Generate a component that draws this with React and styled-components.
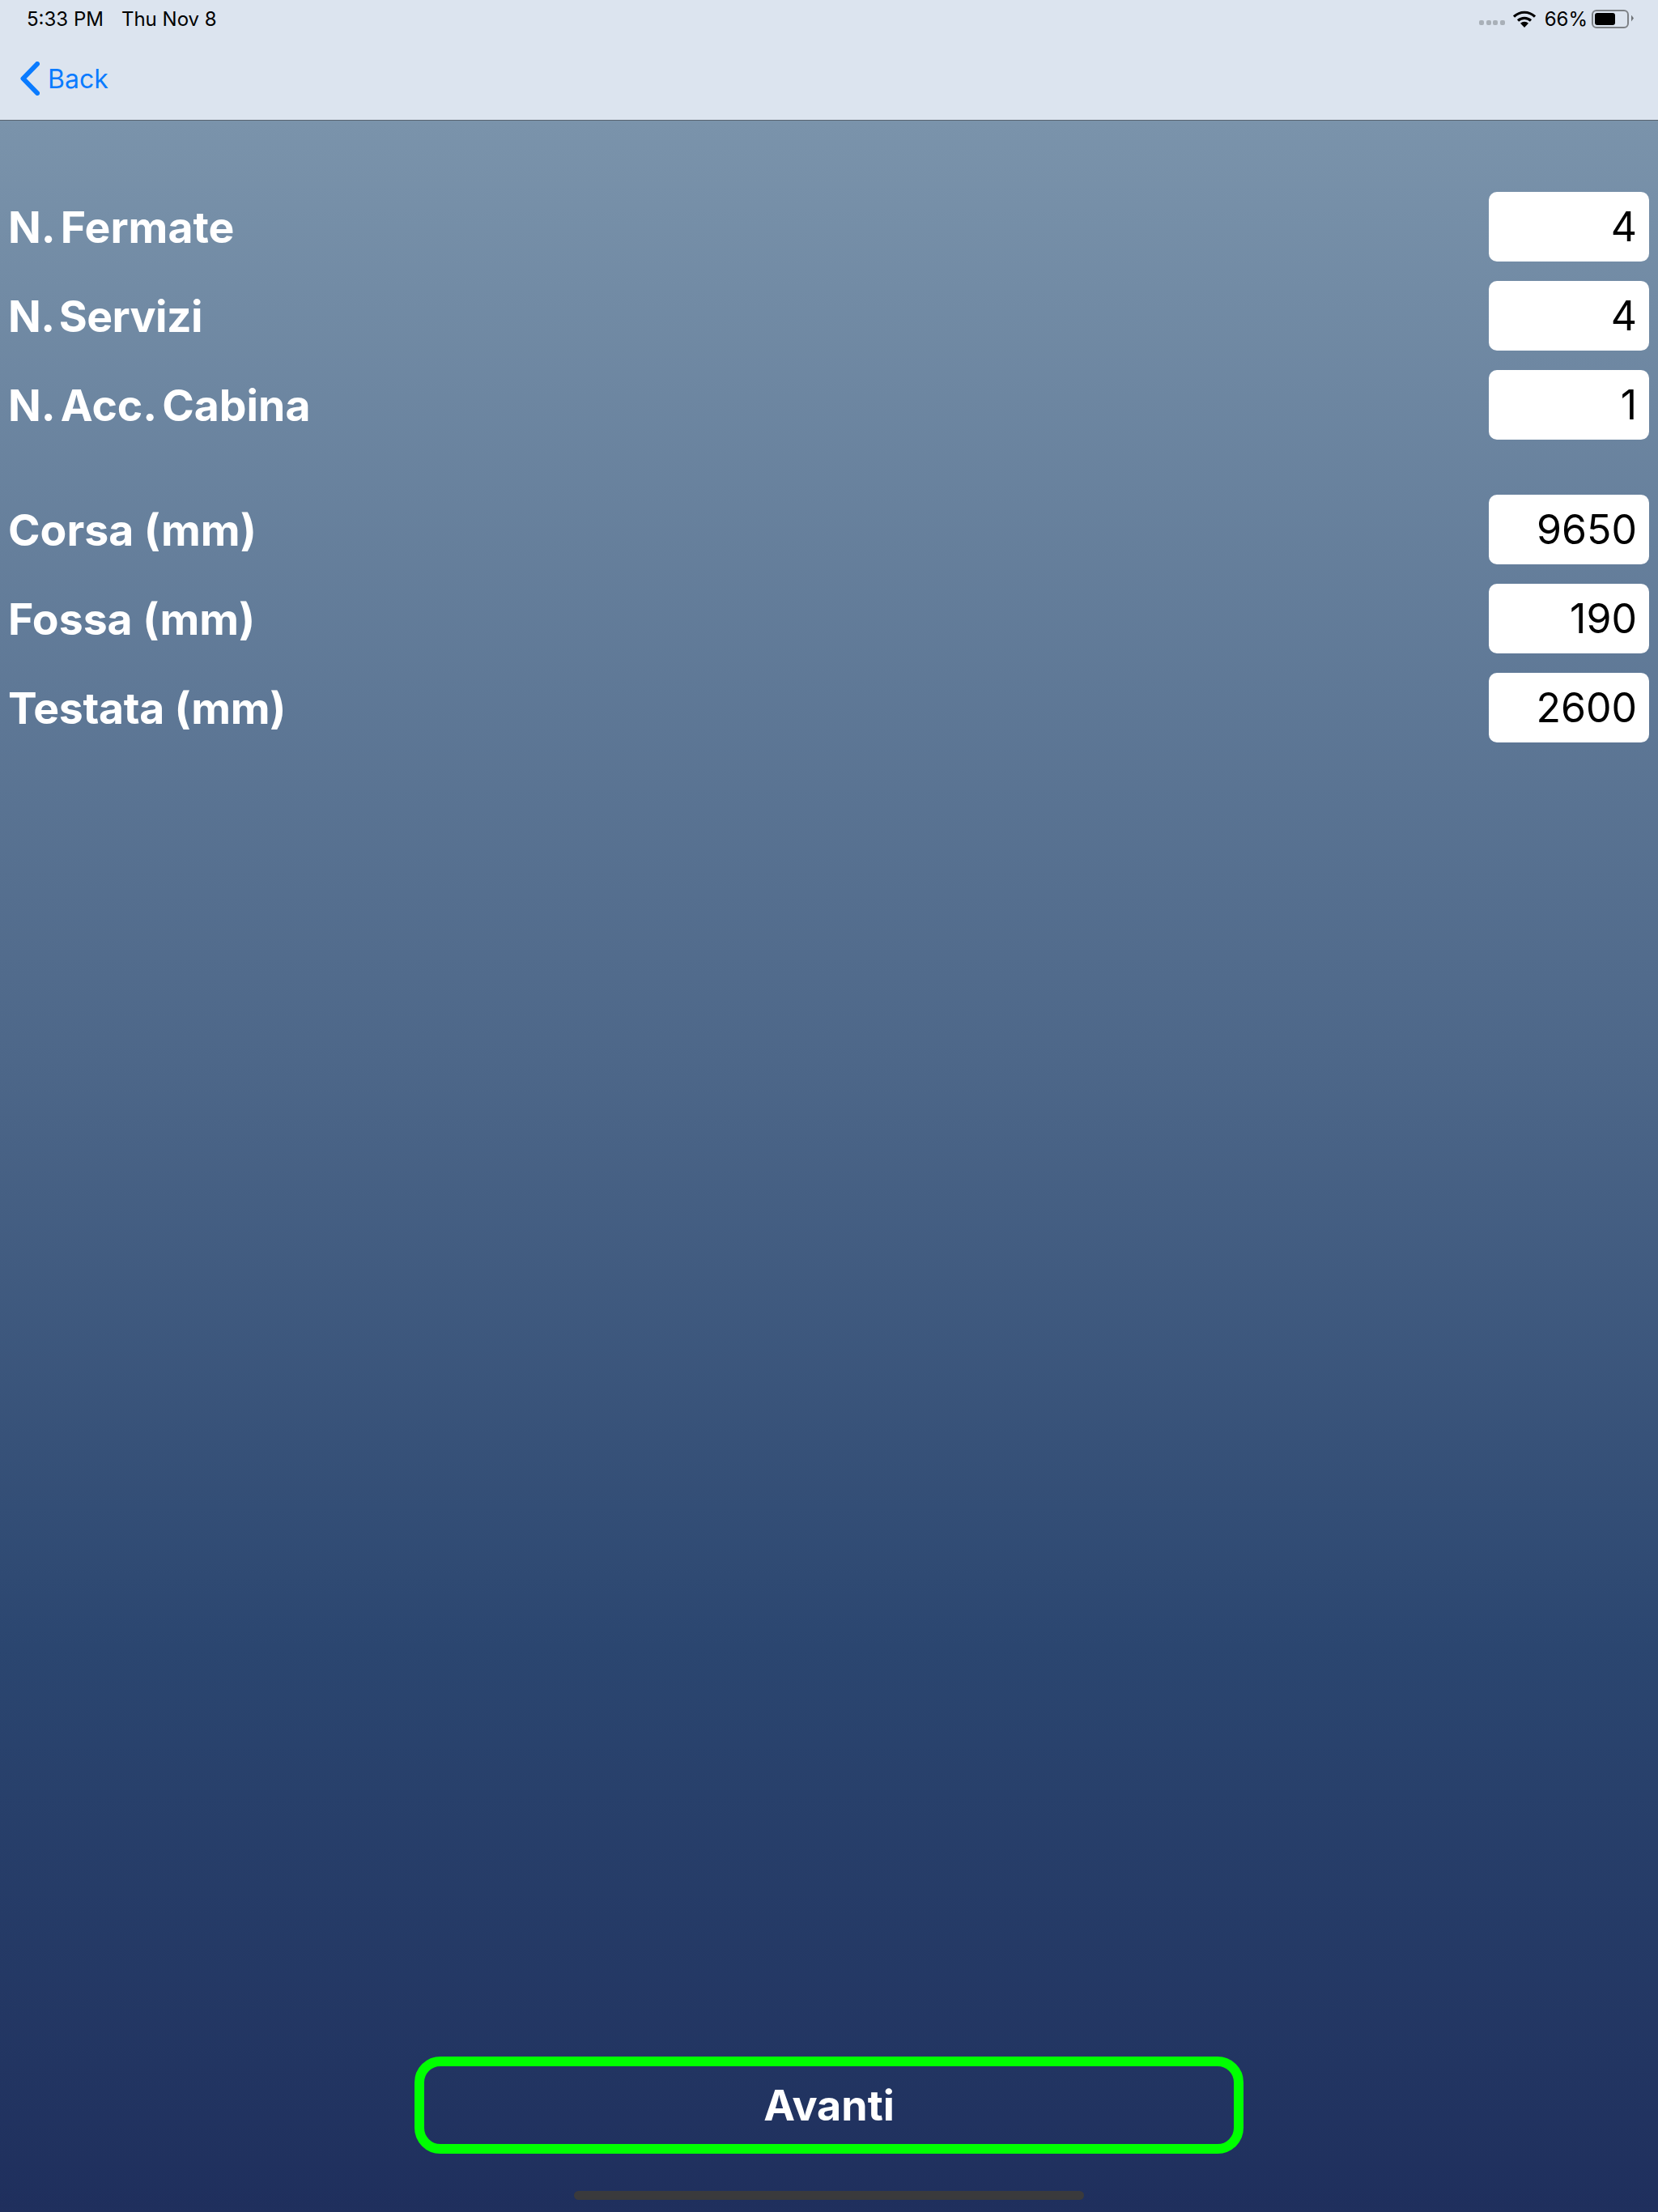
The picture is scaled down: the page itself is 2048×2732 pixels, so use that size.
import React from "react";
import styled, { createGlobalStyle } from "styled-components";

const GlobalStyle = createGlobalStyle`
  html, body {
    margin: 0;
    padding: 0;
  }
  body {
    font-family: Inter, "Liberation Sans", sans-serif;
  }
`;

const Page = styled.div`
  width: 2048px;
  height: 2732px;
  display: flex;
  flex-direction: column;
  overflow: hidden;
  background: #1f2f5d;
`;

const NavBar = styled.header`
  height: 148px;
  flex: none;
  background-color: #dce4ef;
  border-bottom: 1px solid #59636f;
  display: flex;
  flex-direction: column;
`;

const StatusBar = styled.div`
  height: 46px;
  padding: 0 36px 0 33px;
  display: flex;
  align-items: center;
  font-size: 24px;
  color: #000;
`;

const StatusDate = styled.span`
  margin-left: 22px;
`;

const StatusRight = styled.div`
  margin-left: auto;
  display: flex;
  align-items: center;
`;

const SignalDots = styled.div`
  display: flex;
  gap: 2.5px;
  margin-top: 10px;
  margin-right: 10px;
`;

const SignalDot = styled.span`
  width: 6px;
  height: 6px;
  border-radius: 2px;
  background-color: #a9b0b8;
`;

const BatteryText = styled.span`
  margin: 0 5px 0 11px;
`;

const Battery = styled.div`
  width: 46px;
  height: 23px;
  box-sizing: border-box;
  border: 2px solid #7d8186;
  border-radius: 6px;
  padding: 2px;
  position: relative;
  &::after {
    content: "";
    position: absolute;
    right: -8px;
    top: 5px;
    width: 3px;
    height: 8px;
    background-color: #6e7277;
    clip-path: polygon(0 0, 100% 50%, 0 100%);
  }
`;

const BatteryLevel = styled.div`
  height: 100%;
  border-radius: 3px;
  background-color: #000;
`;

const BackRow = styled.div`
  flex: 1;
  padding-left: 25px;
  display: flex;
  align-items: center;
  gap: 10px;
  color: #0a7bff;
  font-size: 32px;
`;

const Content = styled.main`
  flex: 1;
  padding-top: 88px;
  display: flex;
  flex-direction: column;
  gap: 68px;
  background: linear-gradient(#7a93ab 0%, #4d6789 45%, #2b4670 73%, #1f2f5d 100%);
`;

const Group = styled.section`
  display: flex;
  flex-direction: column;
  gap: 24px;
`;

const Row = styled.div`
  height: 86px;
  padding: 0 11px 0 10px;
  display: flex;
  align-items: center;
  justify-content: space-between;
`;

const Label = styled.label`
  font-size: 53.5px;
  font-weight: 700;
  color: #fff;
  word-spacing: ${(props) => props.$wordGap || 0}px;
  letter-spacing: ${(props) => props.$kern || 0}px;
`;

const ValueBox = styled.div`
  width: 198px;
  height: 86px;
  box-sizing: border-box;
  padding-right: 15px;
  background-color: #fff;
  border-radius: 10px;
  display: flex;
  align-items: center;
  justify-content: flex-end;
  font-size: 50px;
  color: #000;
`;

const Footer = styled.footer`
  margin-top: auto;
  padding-bottom: 15px;
  display: flex;
  flex-direction: column;
  align-items: center;
  gap: 46px;
`;

const NextButton = styled.button`
  width: 1024px;
  height: 120px;
  box-sizing: border-box;
  padding: 0;
  border: 12px solid #00ff00;
  border-radius: 32px;
  background: transparent;
  color: #fff;
  font-family: Inter, "Liberation Sans", sans-serif;
  font-size: 52px;
  font-weight: 700;
`;

const HomeBar = styled.div`
  width: 630px;
  height: 11px;
  border-radius: 6px;
  background-color: #3a3a3c;
`;

const firstGroup = [
  { label: "N. Fermate", value: "4", wordGap: -5 },
  { label: "N. Servizi", value: "4", wordGap: -5, kern: -0.6 },
  { label: "N. Acc. Cabina", value: "1", wordGap: -5 },
];

const secondGroup = [
  { label: "Corsa (mm)", value: "9650" },
  { label: "Fossa (mm)", value: "190" },
  { label: "Testata (mm)", value: "2600", kern: -0.3 },
];

function Fields({ items }) {
  return (
    <Group>
      {items.map((item) => (
        <Row key={item.label}>
          <Label $wordGap={item.wordGap} $kern={item.kern}>{item.label}</Label>
          <ValueBox>{item.value}</ValueBox>
        </Row>
      ))}
    </Group>
  );
}

function App() {
  return (
    <Page>
      <GlobalStyle />
      <NavBar>
        <StatusBar>
          <span>5:33 PM</span>
          <StatusDate>Thu Nov 8</StatusDate>
          <StatusRight>
            <SignalDots>
              <SignalDot />
              <SignalDot />
              <SignalDot />
              <SignalDot />
            </SignalDots>
            <svg width="28" height="21" viewBox="0 0 28 21">
              <path d="M1 7.5C8.5 .5 19.5 .5 27 7.5" fill="none" stroke="#000" strokeWidth="3.2" />
              <path d="M6 12.5C10.5 8.3 17.5 8.3 22 12.5" fill="none" stroke="#000" strokeWidth="3.2" />
              <path d="M9 15.8C11.8 13 16.2 13 19 15.8L14 21Z" fill="#000" />
            </svg>
            <BatteryText>66%</BatteryText>
            <Battery>
              <BatteryLevel style={{ width: "66%" }} />
            </Battery>
          </StatusRight>
        </StatusBar>
        <BackRow>
          <svg width="24" height="42" viewBox="0 0 24 42">
            <path d="M21 3L3.5 21L21 39" fill="none" stroke="#0a7bff" strokeWidth="6" strokeLinecap="round" strokeLinejoin="round" />
          </svg>
          <span>Back</span>
        </BackRow>
      </NavBar>
      <Content>
        <Fields items={firstGroup} />
        <Fields items={secondGroup} />
        <Footer>
          <NextButton>Avanti</NextButton>
          <HomeBar />
        </Footer>
      </Content>
    </Page>
  );
}

export default App;
